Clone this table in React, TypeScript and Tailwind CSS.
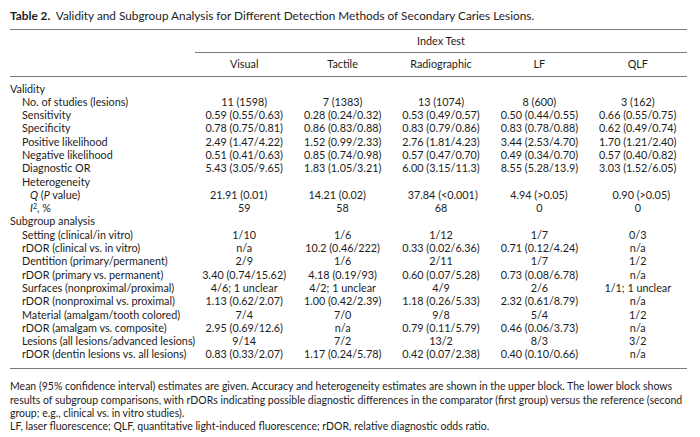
import React from "react";

type Row = {
  label: React.ReactNode;
  indent: 0 | 1 | 2;
  values?: string[];
  leftPad?: string[];
};

const rows: Row[] = [
  { label: "Validity", indent: 0 },
  { label: "No. of studies (lesions)", indent: 1, values: ["11 (1598)", "7 (1383)", "13 (1074)", "8 (600)", "3 (162)"] },
  { label: "Sensitivity", indent: 1, values: ["0.59 (0.55/0.63)", "0.28 (0.24/0.32)", "0.53 (0.49/0.57)", "0.50 (0.44/0.55)", "0.66 (0.55/0.75)"] },
  { label: "Specificity", indent: 1, values: ["0.78 (0.75/0.81)", "0.86 (0.83/0.88)", "0.83 (0.79/0.86)", "0.83 (0.78/0.88)", "0.62 (0.49/0.74)"] },
  { label: "Positive likelihood", indent: 1, values: ["2.49 (1.47/4.22)", "1.52 (0.99/2.33)", "2.76 (1.81/4.23)", "3.44 (2.53/4.70)", "1.70 (1.21/2.40)"] },
  { label: "Negative likelihood", indent: 1, values: ["0.51 (0.41/0.63)", "0.85 (0.74/0.98)", "0.57 (0.47/0.70)", "0.49 (0.34/0.70)", "0.57 (0.40/0.82)"] },
  { label: "Diagnostic OR", indent: 1, values: ["5.43 (3.05/9.65)", "1.83 (1.05/3.21)", "6.00 (3.15/11.3)", "8.55 (5.28/13.9)", "3.03 (1.52/6.05)"] },
  { label: "Heterogeneity", indent: 1 },
  {
    label: (
      <>
        <i>Q</i> (<i>P</i> value)
      </>
    ),
    indent: 2,
    values: ["21.91 (0.01)", "14.21 (0.02)", "37.84 (<0.001)", "4.94 (>0.05)", "0.90 (>0.05)"],
    leftPad: ["pl-[15px]", "pl-[15px]", "pl-[16px]", "pl-[20px]", "pl-[24px]"],
  },
  {
    label: (
      <>
        <i>I</i>
        <sup className="text-[7px]">2</sup>, %
      </>
    ),
    indent: 2,
    values: ["59", "58", "68", "0", "0"],
  },
  { label: "Subgroup analysis", indent: 0 },
  { label: "Setting (clinical/in vitro)", indent: 1, values: ["1/10", "1/6", "1/12", "1/7", "0/3"] },
  { label: "rDOR (clinical vs. in vitro)", indent: 1, values: ["n/a", "10.2 (0.46/222)", "0.33 (0.02/6.36)", "0.71 (0.12/4.24)", "n/a"] },
  { label: "Dentition (primary/permanent)", indent: 1, values: ["2/9", "1/6", "2/11", "1/7", "1/2"] },
  { label: "rDOR (primary vs. permanent)", indent: 1, values: ["3.40 (0.74/15.62)", "4.18 (0.19/93)", "0.60 (0.07/5.28)", "0.73 (0.08/6.78)", "n/a"] },
  { label: "Surfaces (nonproximal/proximal)", indent: 1, values: ["4/6; 1 unclear", "4/2; 1 unclear", "4/9", "2/6", "1/1; 1 unclear"] },
  { label: "rDOR (nonproximal vs. proximal)", indent: 1, values: ["1.13 (0.62/2.07)", "1.00 (0.42/2.39)", "1.18 (0.26/5.33)", "2.32 (0.61/8.79)", "n/a"] },
  { label: "Material (amalgam/tooth colored)", indent: 1, values: ["7/4", "7/0", "9/8", "5/4", "1/2"] },
  { label: "rDOR (amalgam vs. composite)", indent: 1, values: ["2.95 (0.69/12.6)", "n/a", "0.79 (0.11/5.79)", "0.46 (0.06/3.73)", "n/a"] },
  { label: "Lesions (all lesions/advanced lesions)", indent: 1, values: ["9/14", "7/2", "13/2", "8/3", "3/2"] },
  { label: "rDOR (dentin lesions vs. all lesions)", indent: 1, values: ["0.83 (0.33/2.07)", "1.17 (0.24/5.78)", "0.42 (0.07/2.38)", "0.40 (0.10/0.66)", "n/a"] },
];

const indentClass = ["pl-0", "pl-[12px]", "pl-[20px]"];
const methods = ["Visual", "Tactile", "Radiographic", "LF", "QLF"];

export default function App() {
  return (
    <div className="h-[437px] w-[700px] bg-white pl-[10px] pt-[9px] text-[#1c1c1c] font-['Lato',sans-serif]">
      <p className="whitespace-nowrap text-[11.8px] leading-[13px]">
        <b>Table 2.</b>&nbsp; Validity and Subgroup Analysis for Different Detection Methods of Secondary Caries Lesions.
      </p>

      <table className="mt-[7px] w-[677px] table-fixed border-collapse text-[10.8px]">
        <colgroup>
          <col className="w-[185px]" />
          <col className="w-[98.4px]" />
          <col className="w-[98.4px]" />
          <col className="w-[98.4px]" />
          <col className="w-[98.4px]" />
          <col className="w-[98.4px]" />
        </colgroup>
        <thead>
          <tr className="h-[23px] border-t border-[#7a7a7a]">
            <th />
            <th colSpan={5} className="border-b border-[#7a7a7a] text-center font-normal">
              Index Test
            </th>
          </tr>
          <tr className="h-[24px] border-b border-[#7a7a7a]">
            <th />
            {methods.map((m) => (
              <th key={m} className="text-center font-normal">
                {m}
              </th>
            ))}
          </tr>
        </thead>
        <tbody className="border-b border-[#7a7a7a]">
          <tr className="h-[5px]">
            <td colSpan={6} />
          </tr>
          {rows.map((r, i) => (
            <tr key={i} className="h-[13.3px] leading-[13.3px]">
              <td className={`whitespace-nowrap p-0 ${indentClass[r.indent]}`}>{r.label}</td>
              {(r.values ?? ["", "", "", "", ""]).map((v, j) => (
                <td
                  key={j}
                  className={`whitespace-nowrap p-0 ${r.leftPad ? `text-left ${r.leftPad[j]}` : "text-center"}`}
                >
                  {v}
                </td>
              ))}
            </tr>
          ))}
          <tr className="h-[8px]">
            <td colSpan={6} />
          </tr>
        </tbody>
      </table>

      <div className="mt-[11px] whitespace-nowrap text-[10.5px] leading-[13.3px]">
        <p>
          Mean (95% confidence interval) estimates are given. Accuracy and heterogeneity estimates are shown in the upper block. The lower block shows
          <br />
          results of subgroup comparisons, with rDORs indicating possible diagnostic differences in the comparator (first group) versus the reference (second
          <br />
          group; e.g., clinical vs. in vitro studies).
        </p>
        <p>LF, laser fluorescence; QLF, quantitative light-induced fluorescence; rDOR, relative diagnostic odds ratio.</p>
      </div>
    </div>
  );
}
